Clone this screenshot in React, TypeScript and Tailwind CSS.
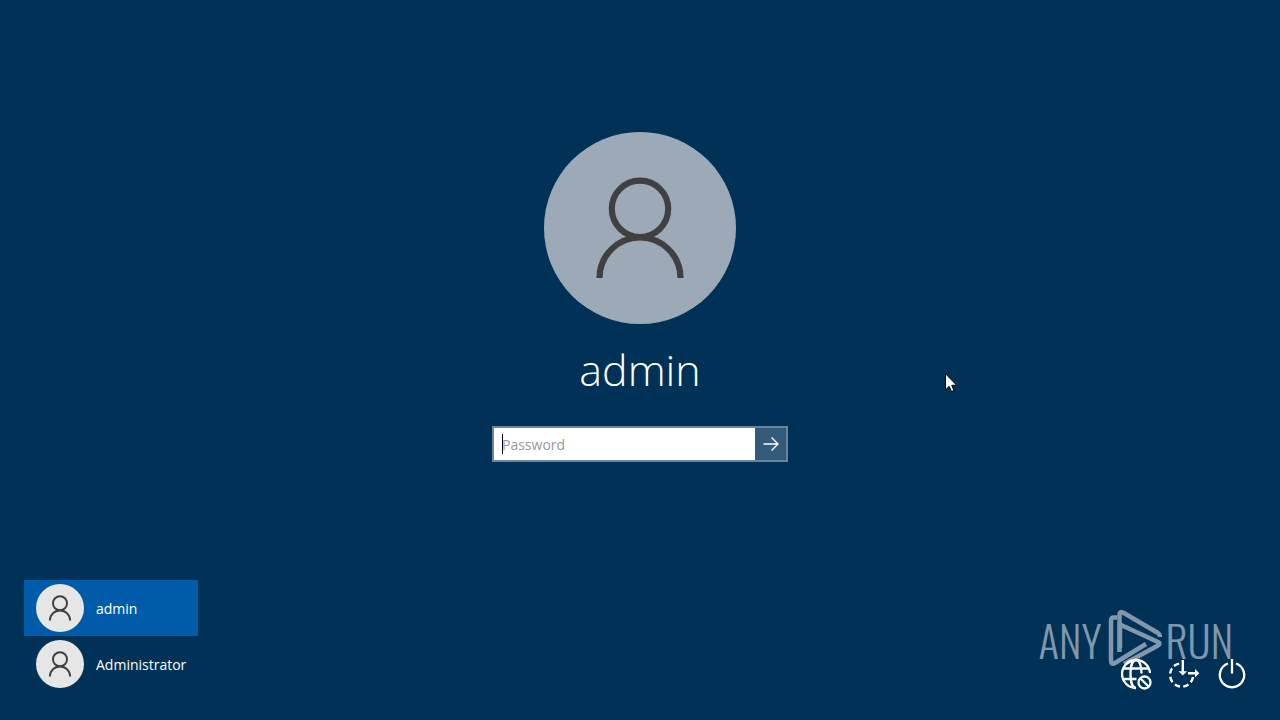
import { useState } from 'react'

function Person({ className, stroke }: { className: string; stroke: number }) {
  return (
    <svg viewBox="0 0 192 192" className={className} fill="none" stroke="#404040" strokeWidth={stroke} aria-hidden="true">
      <circle cx="96" cy="76.800" r="28.200" />
      <path d="M55.500 146a40.500 40.500 0 0 1 81 0" />
    </svg>
  )
}

function GlobeBlocked() {
  return (
    <svg viewBox="0 0 32 32" className="size-8" fill="none" stroke="white" strokeWidth="2.300" aria-hidden="true">
      <path d="M30 15A14 14 0 1 0 16 30" />
      <path d="M21.500 15.500C21.500 8 19.500 2 16 2S10.500 8 10.500 16s2 14 5.500 14" />
      <path d="M3.500 10.500h25M3.500 21h13" />
      <circle cx="24.500" cy="24.500" r="6" />
      <path d="m20.500 20.500 8 8" />
    </svg>
  )
}

function EaseOfAccess() {
  return (
    <svg viewBox="0 0 32 32" className="size-8" fill="none" stroke="white" strokeWidth="2.400" aria-hidden="true">
      <path d="M11.200 5.600A11.600 11.600 0 0 0 6 8M4 10.300A11.600 11.600 0 0 0 2.100 15.500M2.200 18.800A11.600 11.600 0 0 0 4.500 24.200M6.900 26.500A11.600 11.600 0 0 0 12 28.500M15.300 28.500A11.600 11.600 0 0 0 20.500 26.500M22.800 24.200A11.600 11.600 0 0 0 25 19" />
      <path d="M14.800 2v12M20 15.300h8" />
      <path d="m10.500 13.300 4.300 4.200 4.300-4.200zM27 11l4.300 4.300-4.300 4.200z" fill="white" stroke="none" />
    </svg>
  )
}

function Power() {
  return (
    <svg viewBox="0 0 32 32" className="size-8" fill="none" stroke="white" strokeWidth="2.300" aria-hidden="true">
      <path d="M12 5.500a12.200 12.200 0 1 0 8 0M16 1v14.500" />
    </svg>
  )
}

const users = ['admin', 'Administrator']

const actions = [
  { label: 'Network', icon: <GlobeBlocked /> },
  { label: 'Ease of access', icon: <EaseOfAccess /> },
  { label: 'Power', icon: <Power /> },
]

export default function App() {
  const [user, setUser] = useState('admin')
  const [password, setPassword] = useState('')

  return (
    <div className="relative flex min-h-screen flex-col overflow-hidden bg-[#003156] font-['Open_Sans','Noto_Sans',sans-serif] text-white">
      <main className="flex flex-1 flex-col items-center pt-[132px]">
        <div className="rounded-full bg-[#9baab6]">
          <Person className="size-48" stroke={6.2} />
        </div>
        <h1 className="mt-3 text-[43px] leading-[68px] font-light">{user}</h1>
        <form
          className="mt-[22px] flex h-9 w-[296px] border-2 border-[#6b8599] bg-white"
          onSubmit={(e) => e.preventDefault()}
        >
          <div className="relative flex-1">
            <input
              type="password"
              aria-label="Password"
              placeholder="Password"
              value={password}
              onChange={(e) => setPassword(e.target.value)}
              className="h-full w-full bg-transparent px-2 text-[14px] text-black outline-none placeholder:text-[#999999]"
            />
            {password === '' && <span className="absolute top-1.5 left-2 h-5 w-px bg-black" />}
          </div>
          <button type="submit" aria-label="Submit" className="flex w-[31px] items-center justify-center bg-[#335a7a]">
            <svg viewBox="0 0 16 16" className="size-4" fill="none" stroke="white" strokeWidth="1.300" aria-hidden="true">
              <path d="M.500 8H15M8.500 1.500 15 8l-6.500 6.500" />
            </svg>
          </button>
        </form>
      </main>

      <footer className="flex items-end justify-between px-6 pb-7">
        <ul className="flex flex-col">
          {users.map((name) => (
            <li key={name}>
              <button
                type="button"
                onClick={() => setUser(name)}
                className={
                  name === user
                    ? 'flex h-14 w-full items-center gap-3 bg-[#005ca8] px-3 text-[14px]'
                    : 'flex h-14 w-full items-center gap-3 px-3 text-[14px]'
                }
              >
                <span className="rounded-full bg-[#e6e6e6]">
                  <Person className="size-12" stroke={8} />
                </span>
                {name}
              </button>
            </li>
          ))}
        </ul>
        <div className="flex">
          {actions.map((a) => (
            <button key={a.label} type="button" aria-label={a.label} className="flex h-9 w-12 items-center justify-center">
              {a.icon}
            </button>
          ))}
        </div>
      </footer>

      <div className="pointer-events-none absolute right-[47px] bottom-[45px] flex items-center gap-1 font-['Oswald','Roboto_Condensed',sans-serif] text-[43px] leading-[64px] font-[350] opacity-50">
        <span>ANY</span>
        <svg viewBox="4 2 56 70" className="h-[70px] w-14" fill="none" stroke="white" strokeWidth="4.500" strokeLinejoin="round" aria-hidden="true">
          <path d="M15 14.500h-3q-3 0-3 3V58q0 4 4 2L44 41" />
          <path d="M17.500 49V12q0-4 3.500-2.500L56 30q2 1.500 2 4" />
          <path d="M18 45V21.500L56 39q3 1.500 0 3.500L22 61" />
        </svg>
        <span>RUN</span>
      </div>

      <svg viewBox="0 0 12 19" className="pointer-events-none absolute top-[373px] left-[945px] h-[19px] w-3" aria-hidden="true">
        <path d="M.5.800v16l3.700-3.500 2.300 5.200 2.500-1-2.300-5.200h5z" fill="white" stroke="black" strokeWidth="1" />
      </svg>
    </div>
  )
}
